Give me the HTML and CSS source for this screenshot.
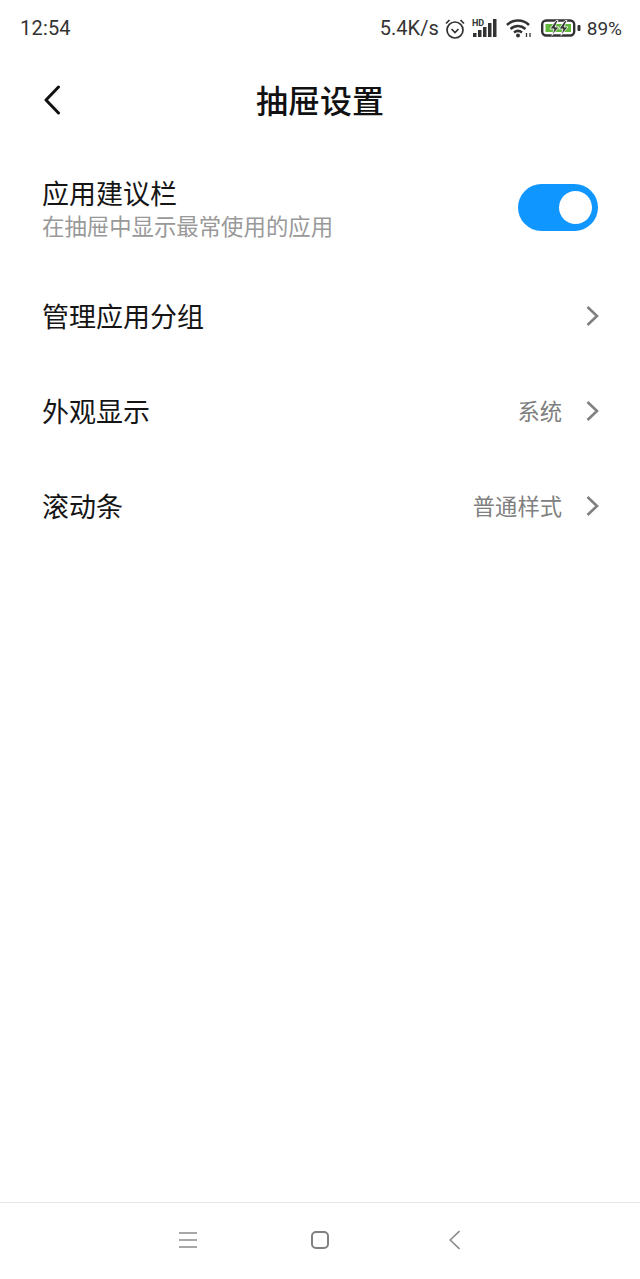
FILE: index.html
```html
<!DOCTYPE html>
<html lang="zh-CN">
<head>
<meta charset="utf-8">
<title>抽屉设置</title>
<link rel="stylesheet" href="styles.css">
</head>
<body>
<div class="screen">
  <header class="status">
    <span class="time">12:54</span>
    <div class="status-right">
      <span class="speed">5.4K/s</span>
      <svg class="ic-alarm" width="20" height="21" viewBox="0 0 20 21" fill="none" stroke="#333" stroke-width="1.700"><circle cx="10" cy="12" r="8"/><path d="M6.500 11l3.500 3.500 3.500-3.500M1 5.500L4.500 2M19 5.500L15.500 2"/></svg>
      <svg class="ic-signal" width="26" height="20" viewBox="0 0 26 20"><text x="0" y="7.500" class="hd">HD</text><g fill="#333"><rect x="1" y="15" width="3.500" height="4"/><rect x="6" y="12" width="3.500" height="7"/><rect x="11" y="9" width="3.500" height="10"/><rect x="16" y="5" width="3.500" height="14"/><rect x="21" y="1" width="3.500" height="18"/></g></svg>
      <svg class="ic-wifi" width="26" height="20" viewBox="0 0 26 20" fill="none" stroke="#333" stroke-width="2.500"><path d="M1 7C7 1 17 1 23 7M4.500 11C9 7 15 7 19.500 11M8 14.500C10.500 12.500 13.500 12.500 16 14.500"/><circle cx="12" cy="17.500" r="2" fill="#333" stroke="none"/><path d="M20.500 19v-4M24 19v-4" stroke-width="1.300"/></svg>
      <svg class="ic-batt" width="40" height="18" viewBox="0 0 40 18" fill="none"><rect x="1.200" y="1.500" width="32" height="15" rx="4" stroke="#333" stroke-width="2.400"/><rect x="4.500" y="5" width="25.500" height="8" fill="#62b93c"/><path d="M15 1.500l-6 8.500h4l-2 6.500 7-8.500h-4l3-6.500zM24 1.500l-6 8.500h4l-2 6.500 7-8.500h-4l3-6.500z" fill="#333" stroke="#fff" stroke-width=".8"/><rect x="36.500" y="6" width="3" height="6" rx="1" fill="#333"/></svg>
      <span class="pct">89%</span>
    </div>
  </header>

  <div class="titlebar">
    <svg class="back" width="18" height="30" viewBox="0 0 18 30" fill="none" stroke="#111" stroke-width="3" stroke-linecap="round" stroke-linejoin="round"><path d="M15.500 2L3 15l12.500 13"/></svg>
    <h1 class="title">抽屉设置</h1>
  </div>

  <main class="list">
    <div class="row row-switch">
      <div class="row-text">
        <div class="label">应用建议栏</div>
        <div class="sub">在抽屉中显示最常使用的应用</div>
      </div>
      <div class="switch"><span class="knob"></span></div>
    </div>
    <div class="row">
      <div class="label">管理应用分组</div>
      <svg class="chev" width="14" height="22" viewBox="0 0 14 22" fill="none" stroke="#808080" stroke-width="2.600"><path d="M2.500 2l9.500 9-9.500 9"/></svg>
    </div>
    <div class="row">
      <div class="label">外观显示</div>
      <span class="value">系统</span>
      <svg class="chev" width="14" height="22" viewBox="0 0 14 22" fill="none" stroke="#808080" stroke-width="2.600"><path d="M2.500 2l9.500 9-9.500 9"/></svg>
    </div>
    <div class="row">
      <div class="label">滚动条</div>
      <span class="value">普通样式</span>
      <svg class="chev" width="14" height="22" viewBox="0 0 14 22" fill="none" stroke="#808080" stroke-width="2.600"><path d="M2.500 2l9.500 9-9.500 9"/></svg>
    </div>
  </main>

  <nav class="navbar">
    <svg width="18" height="18" viewBox="0 0 18 18" fill="none" stroke="#8c8c8c" stroke-width="1.600"><path d="M0 2h18M0 9h18M0 16h18"/></svg>
    <svg width="18" height="18" viewBox="0 0 18 18" fill="none" stroke="#808080" stroke-width="2"><rect x="1" y="1" width="16" height="16" rx="4"/></svg>
    <svg class="nav-back" width="11" height="20" viewBox="0 0 11 20" fill="none" stroke="#8c8c8c" stroke-width="1.600"><path d="M10.500 1L1.200 10l9.300 9"/></svg>
  </nav>
</div>
</body>
</html>
```
FILE: styles.css
```css
* { box-sizing: border-box; margin: 0; padding: 0; }
html, body { background: #fff; }
body { font-family: "Noto Sans CJK SC", "Noto Sans", sans-serif; }
.screen { width: 640px; height: 1279px; display: flex; flex-direction: column; overflow: hidden; }

.status { height: 56px; padding: 0 18px 0 20px; display: flex; align-items: center; justify-content: space-between; color: #333; }
.time { font: 400 20px "Roboto", sans-serif; letter-spacing: .2px; }
.status-right { display: flex; align-items: center; gap: 6px; }
.speed { font: 400 20px "Roboto", sans-serif; }
.pct { font: 400 19px "Roboto", sans-serif; }
.hd { font: 700 9px "Roboto", sans-serif; fill: #333; }
.ic-signal { margin-left: 1px; }
.ic-wifi { margin-left: 2px; }
.ic-batt { margin-left: 3px; }

.titlebar { height: 90px; position: relative; display: flex; align-items: center; justify-content: center; padding-bottom: 4px; }
.back { position: absolute; left: 43px; top: 29px; }
.title { font-size: 32px; font-weight: 500; color: #111; line-height: 86px; }

.list { padding-top: 7px; display: flex; flex-direction: column; }
.row { height: 95px; padding: 0 41px 0 42px; display: flex; align-items: center; gap: 23px; }
.row-switch { height: 108px; margin-bottom: 7px; padding-right: 42px; justify-content: space-between; }
.row .label { flex: 1; }
.row-text { flex: 1; display: flex; flex-direction: column; }
.row-text .label { flex: none; }
.label { font-size: 27px; line-height: 36px; color: #151515; }
.sub { font-size: 22.400px; line-height: 29px; color: #999; }
.value { font-size: 22.300px; line-height: 28px; margin-bottom: 2px; color: #808080; }
.chev { display: block; }
.switch { width: 80px; height: 47px; border-radius: 24px; background: #0f96ff; display: flex; align-items: center; justify-content: flex-end; padding-right: 6px; }
.knob { width: 33px; height: 33px; border-radius: 50%; background: #fff; }

.navbar { margin-top: auto; height: 77px; border-top: 1px solid #e8e8e8; display: flex; align-items: center; justify-content: center; gap: 114px; padding: 0 1px 3px 0; }
.nav-back { margin-left: 6px; }
```
